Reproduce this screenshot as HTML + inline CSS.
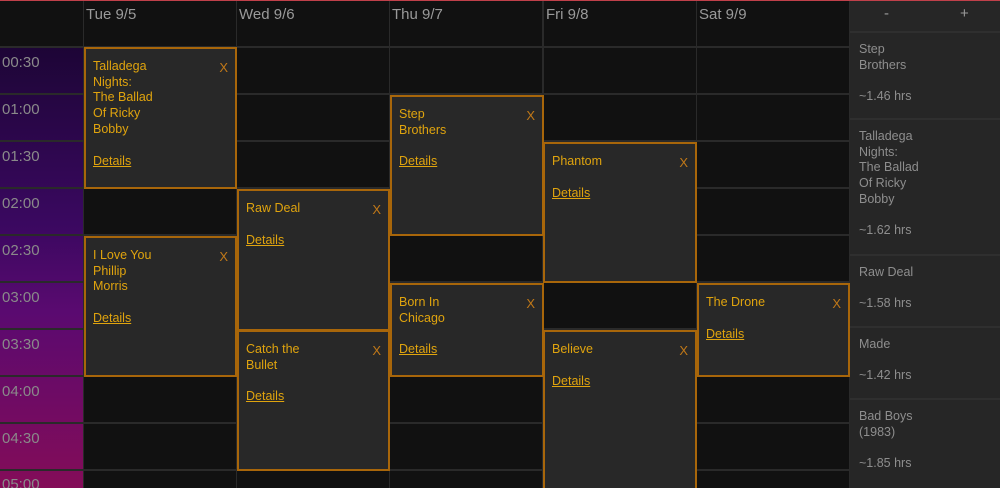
<!DOCTYPE html>
<html style="width:1000px;height:488px;overflow:hidden"><head><style>
*{margin:0;padding:0;box-sizing:border-box}
body{width:1000px;height:488px;background:#2a2a2a;position:relative;overflow:hidden;font-family:"Liberation Sans",sans-serif}
.c{position:absolute;background:#111}
.hd{position:absolute;top:0;height:46px;background:#111;color:#9a9a9a;font-size:15px;padding:6px 2px}
.tcol{position:absolute;left:0;top:48px;width:83px;height:440px;background:linear-gradient(#1d0536,#3a0860 40%,#5a0a70 60%,#840c58)}
.hl{position:absolute;left:0;width:83px;height:2px;background:#2a2a2a}
.t{position:absolute;left:2px;color:#8a8a8a;font-size:15px}
.card{position:absolute;background:#282828;border:2px solid #a8660a;color:#e0a40e;font-size:12.5px;line-height:15.7px;padding:10px 7px}
.card .x{position:absolute;right:7px;top:11px;color:#c07818;font-size:13px}
.card u{display:inline-block;margin-top:16px;text-decoration:underline}
.side{position:absolute;left:850px;top:0;width:150px;height:488px;background:#262626;color:#8e8e8e;font-size:12.5px;line-height:15.7px}
.si{position:absolute;left:0;width:150px;padding:9px 9px;border-top:2px solid #2f2f2f}
</style></head><body>
<div style="position:absolute;left:0;top:0;width:1000px;height:1px;background:#c0404a;z-index:9"></div>
<div class="hd" style="left:0;width:83px"></div>
<div class="hd" style="left:84px;width:152px">Tue 9/5</div>
<div class="hd" style="left:237px;width:152px">Wed 9/6</div>
<div class="hd" style="left:390px;width:152px">Thu 9/7</div>
<div class="hd" style="left:544px;width:152px">Fri 9/8</div>
<div class="hd" style="left:697px;width:152px">Sat 9/9</div>
<div class="tcol"></div>
<div class="hl" style="top:93px"></div><div class="hl" style="top:140px"></div><div class="hl" style="top:187px"></div><div class="hl" style="top:234px"></div><div class="hl" style="top:281px"></div><div class="hl" style="top:328px"></div><div class="hl" style="top:375px"></div><div class="hl" style="top:422px"></div><div class="hl" style="top:469px"></div>
<div class="t" style="top:54px">00:30</div><div class="t" style="top:101px">01:00</div><div class="t" style="top:148px">01:30</div><div class="t" style="top:195px">02:00</div><div class="t" style="top:242px">02:30</div><div class="t" style="top:289px">03:00</div><div class="t" style="top:336px">03:30</div><div class="t" style="top:383px">04:00</div><div class="t" style="top:430px">04:30</div><div class="t" style="top:476px">05:00</div>
<div id="g"></div>
<script>
var xs=[84,237,390,544,697],h='';
for(var i=0;i<5;i++)for(var k=0;k<10;k++)h+='<div class="c" style="left:'+xs[i]+'px;top:'+(48+47*k)+'px;width:152px;height:'+(k==9?18:45)+'px"></div>';
document.getElementById('g').innerHTML=h;
</script>
<div class="card" style="left:84px;top:47px;width:153px;height:142px"><span class="x">X</span>Talladega<br>Nights:<br>The Ballad<br>Of Ricky<br>Bobby<br><u>Details</u></div>
<div class="card" style="left:84px;top:236px;width:153px;height:141px"><span class="x">X</span>I Love You<br>Phillip<br>Morris<br><u>Details</u></div>
<div class="card" style="left:237px;top:189px;width:153px;height:142px"><span class="x">X</span>Raw Deal<br><u>Details</u></div>
<div class="card" style="left:237px;top:330px;width:153px;height:141px"><span class="x">X</span>Catch the<br>Bullet<br><u>Details</u></div>
<div class="card" style="left:390px;top:95px;width:154px;height:141px"><span class="x">X</span>Step<br>Brothers<br><u>Details</u></div>
<div class="card" style="left:390px;top:283px;width:154px;height:94px"><span class="x">X</span>Born In<br>Chicago<br><u>Details</u></div>
<div class="card" style="left:543px;top:142px;width:154px;height:141px"><span class="x">X</span>Phantom<br><u>Details</u></div>
<div class="card" style="left:543px;top:330px;width:154px;height:158px;border-bottom:none"><span class="x">X</span>Believe<br><u>Details</u></div>
<div class="card" style="left:697px;top:283px;width:153px;height:94px"><span class="x">X</span>The Drone<br><u>Details</u></div>
<div class="side">
<div style="position:absolute;top:6px;left:34px;font-size:15px;color:#999">-</div>
<div style="position:absolute;top:6px;left:110px;font-size:15px;color:#999">+</div>
<div class="si" style="top:31px">Step<br>Brothers<br><br>~1.46 hrs</div>
<div class="si" style="top:118px">Talladega<br>Nights:<br>The Ballad<br>Of Ricky<br>Bobby<br><br>~1.62 hrs</div>
<div class="si" style="top:254px">Raw Deal<br><br>~1.58 hrs</div>
<div class="si" style="top:326px">Made<br><br>~1.42 hrs</div>
<div class="si" style="top:398px">Bad Boys<br>(1983)<br><br>~1.85 hrs</div>
</div>
</body></html>
